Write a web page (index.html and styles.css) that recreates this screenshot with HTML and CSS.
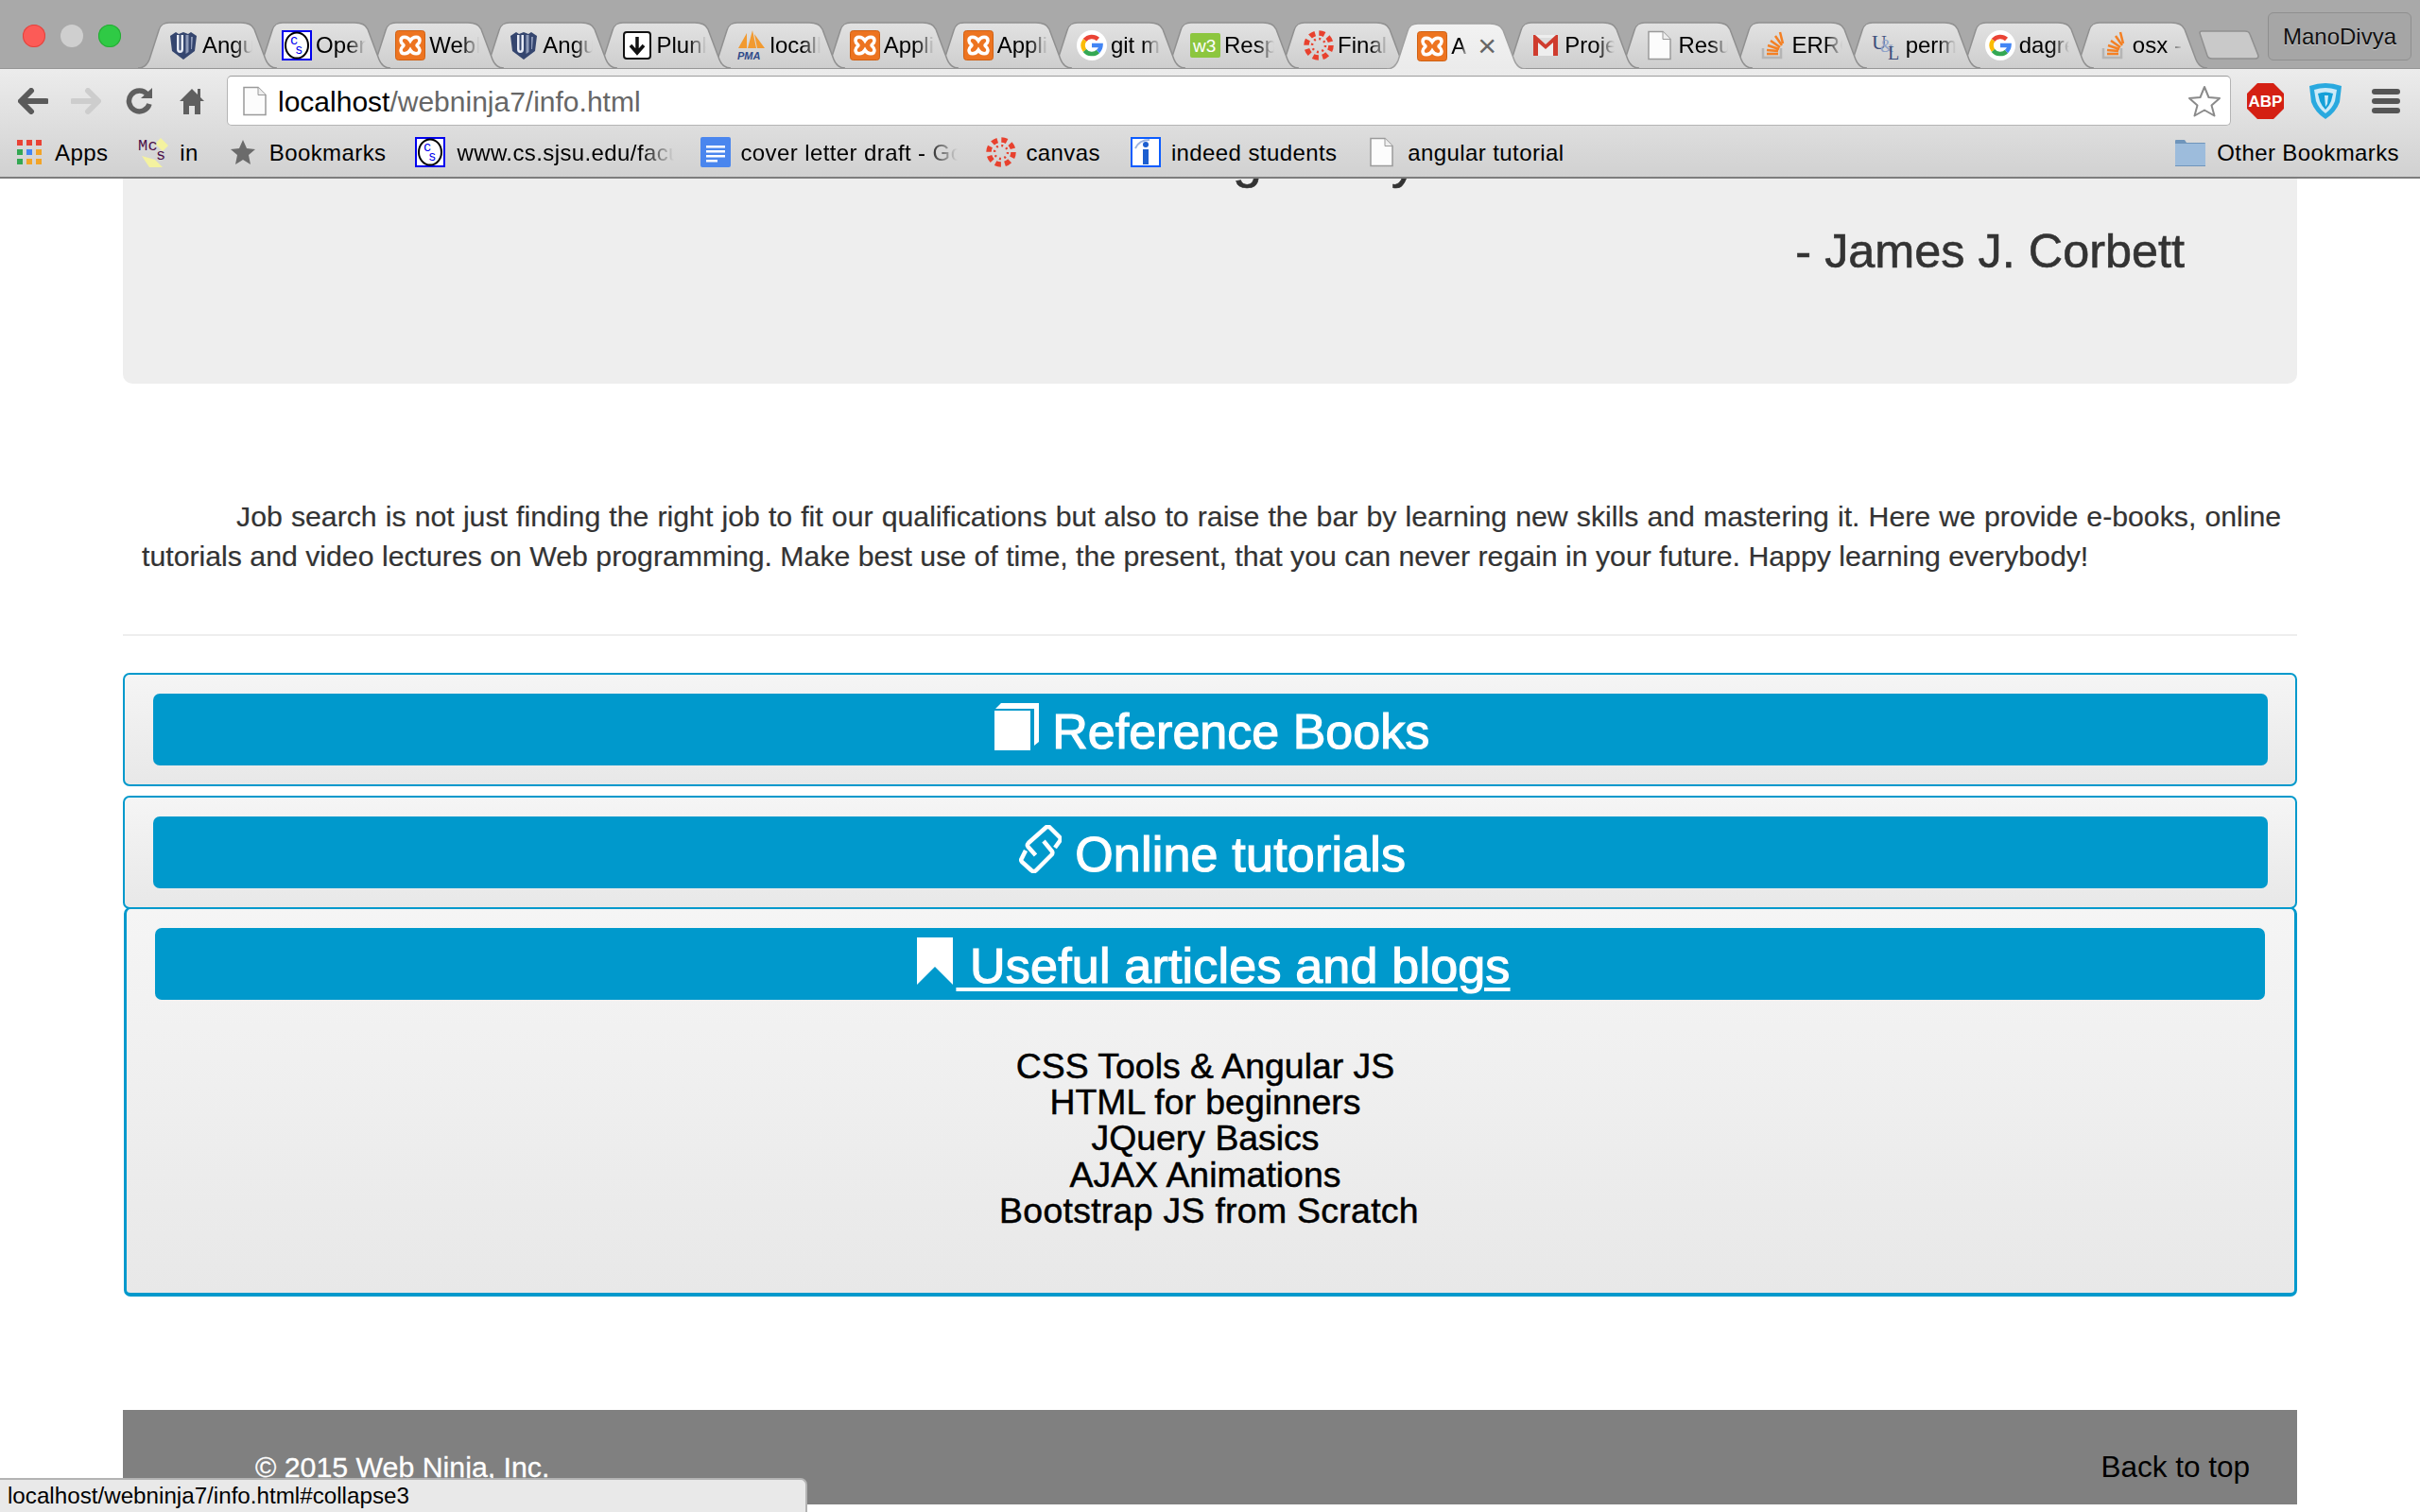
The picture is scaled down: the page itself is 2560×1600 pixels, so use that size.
FILE: index.html
```html
<!DOCTYPE html>
<html lang="en">
<head>
    <meta charset="UTF-8">
    <title>Web Ninja - Info</title>
    <link rel="stylesheet" href="styles.css">
</head>
<body>
    <!-- icon set -->
    <svg class="icon-defs">
        <symbol id="ico-angular" viewBox="0 0 32 32">
            <path d="M2 6l6-4 3 2 5-2 5 2 3-2 6 4-2 16-12 9-12-9z" fill="#35466f"/>
            <path d="M9 5v15q0 4 3.500 4t3.500-4V5h-2.500v15q0 1.500-1 1.500t-1-1.500V5z" fill="#e8ecf6"/>
            <path d="M18.500 5h3v18l-3 2zM24 7h2l-1 13h-1z" fill="#8d9ab8"/>
        </symbol>
        <symbol id="ico-cs" viewBox="0 0 32 32">
            <rect x="1" y="1" width="30" height="30" fill="#fff" stroke="#0000ee" stroke-width="2"/>
            <ellipse cx="16" cy="16" rx="12" ry="13.500" fill="#fff" stroke="#000" stroke-width="2"/>
            <text x="9" y="15" class="ico-mono" font-size="14" fill="#0000ee">c</text>
            <text x="14" y="25" class="ico-mono" font-size="14" fill="#0000ee">s</text>
        </symbol>
        <symbol id="ico-xampp" viewBox="0 0 32 32">
            <rect x="0.500" y="0.500" width="31" height="31" rx="3" fill="#ed7420" stroke="#cf6114"/>
            <path d="M16 11C13 6 6 6 6 11C6 14 9 15 9 16C9 17 6 18 6 21C6 26 13 26 16 21C19 26 26 26 26 21C26 18 23 17 23 16C23 15 26 14 26 11C26 6 19 6 16 11Z" fill="#ed7420" stroke="#fff" stroke-width="3.500"/>
        </symbol>
        <symbol id="ico-plunker" viewBox="0 0 32 32">
            <rect x="2" y="2" width="28" height="28" rx="3" fill="#fff" stroke="#111" stroke-width="2"/>
            <path d="M16 7v16M9 16l7 8 7-8" fill="none" stroke="#111" stroke-width="3.500"/>
        </symbol>
        <symbol id="ico-pma" viewBox="0 0 32 32">
            <path d="M2 19L11 3v16zM12 19L17 0l4 19zM22 19L19 4l11 15z" fill="#f29a30"/>
            <text x="1" y="31" class="ico-sans" font-size="11" font-weight="700" font-style="italic" fill="#2f4a8a">PMA</text>
        </symbol>
        <symbol id="ico-google" viewBox="0 0 32 32">
            <circle cx="16" cy="16" r="16" fill="#fff"/>
            <path d="M22.500 9.500A9.500 9.500 0 0 0 8.500 10.500" fill="none" stroke="#ea4335" stroke-width="4.500"/>
            <path d="M8.500 10.500A9.500 9.500 0 0 0 8.500 21.500" fill="none" stroke="#fbbc05" stroke-width="4.500"/>
            <path d="M8.500 21.500A9.500 9.500 0 0 0 22.500 22.500" fill="none" stroke="#34a853" stroke-width="4.500"/>
            <path d="M22.500 22.500A9.500 9.500 0 0 0 25.500 16H16" fill="none" stroke="#4285f4" stroke-width="4.500"/>
        </symbol>
        <symbol id="ico-w3" viewBox="0 0 32 32">
            <rect y="3" width="32" height="26" rx="2" fill="#8cc63f"/>
            <text x="3" y="23" class="ico-sans" font-size="19" fill="#fff">w3</text>
        </symbol>
        <symbol id="ico-canvas" viewBox="0 0 32 32">
            <circle cx="16" cy="16" r="13" fill="none" stroke="#e8412e" stroke-width="5.500" stroke-dasharray="6 4.200"/>
            <circle cx="16" cy="16" r="7" fill="none" stroke="#e8412e" stroke-width="2.500" stroke-dasharray="2 3.500"/>
        </symbol>
        <symbol id="ico-gmail" viewBox="0 0 32 32">
            <rect x="3" y="5" width="26" height="22" fill="#eee"/>
            <path d="M3 8l13 11L29 8" fill="#ddd"/>
            <path d="M3 5h2l11 10L27 5h2v22h-5V13l-8 7-8-7v14H3z" fill="#cf3c2e"/>
        </symbol>
        <symbol id="ico-doc" viewBox="0 0 32 32">
            <path d="M5 1.500h15l8 8v21H5z" fill="#fcfcfc" stroke="#9a9a9a" stroke-width="1.500"/>
            <path d="M20 1.500v8h8" fill="#eee" stroke="#9a9a9a" stroke-width="1"/>
        </symbol>
        <symbol id="ico-so" viewBox="0 0 32 32">
            <path d="M5 19v10h19V19" fill="none" stroke="#b5b5b5" stroke-width="2.500"/>
            <path d="M9 25h12M9 21l12 1M10 16l12 4M13 11l10 7M18 6l7 10M23 2l3 12" fill="none" stroke="#f48024" stroke-width="2.500"/>
        </symbol>
        <symbol id="ico-ul" viewBox="0 0 32 32">
            <text x="0" y="20" class="ico-serif" font-size="22" fill="#3d4f7c">U</text>
            <text x="9" y="23" class="ico-serif" font-size="18" fill="#8ea1c8">&amp;</text>
            <text x="17" y="31" class="ico-serif" font-size="20" fill="#3d4f7c">L</text>
        </symbol>
        <symbol id="ico-apps" viewBox="0 0 26 26">
            <path d="M0 0h6v6H0zM10 0h6v6h-6zM20 0h6v6h-6z" fill="#e94235"/>
            <path d="M0 10h6v6H0zM0 20h6v6H0z" fill="#34a853"/>
            <path d="M10 10h6v6h-6z" fill="#4285f4"/>
            <path d="M20 10h6v6h-6zM10 20h6v6h-6zM20 20h6v6h-6z" fill="#f2a428"/>
        </symbol>
        <symbol id="ico-mcs" viewBox="0 0 32 32">
            <path d="M24 1l8 8-6 6-8-8zM4 20l14 4 8 8H12z" fill="#f4f2a0"/>
            <text x="0" y="14" class="ico-mono" font-size="17" fill="#4b1048">Mc</text>
            <text x="19" y="24" class="ico-mono" font-size="17" fill="#4b1048">s</text>
        </symbol>
        <symbol id="ico-star" viewBox="0 0 26 26">
            <path d="M13 0l4 9 9 1-7 6 2 10-8-5-8 5 2-10-7-6 9-1z" fill="#6b6b6b"/>
        </symbol>
        <symbol id="ico-docs" viewBox="0 0 32 32">
            <rect width="32" height="32" rx="2" fill="#4a86ee"/>
            <path d="M6 9h20v2.500H6zM6 14h20v2.500H6zM6 19h20v2.500H6zM6 24h12v2.500H6z" fill="#fff"/>
        </symbol>
        <symbol id="ico-indeed" viewBox="0 0 32 32">
            <rect x="1" y="1" width="30" height="30" fill="#fff" stroke="#0b5cff" stroke-width="2"/>
            <path d="M5 12Q9 3 20 3" fill="none" stroke="#9db4df" stroke-width="2"/>
            <circle cx="16" cy="8" r="3" fill="#1d5fd0"/>
            <path d="M13 13h6v16h-6z" fill="#1d5fd0"/>
        </symbol>
        <symbol id="ico-folder" viewBox="0 0 32 32">
            <path d="M0 4q0-1 1-1h9l2 3h19q1 0 1 1v24H0z" fill="#6f95bb"/>
            <path d="M0 7h32v23H0z" fill="#9dbcdc"/>
        </symbol>
    </svg>

    <div class="window">
        <div class="tab-strip">
            <div class="traffic-lights">
                <span class="light light-red"></span>
                <span class="light light-gray"></span>
                <span class="light light-green"></span>
            </div>
            <div class="tab"><svg class="favicon"><use href="#ico-angular"/></svg><span class="tab-label">Angular</span></div>
            <div class="tab"><svg class="favicon"><use href="#ico-cs"/></svg><span class="tab-label">Open</span></div>
            <div class="tab"><svg class="favicon"><use href="#ico-xampp"/></svg><span class="tab-label">WebNinja</span></div>
            <div class="tab"><svg class="favicon"><use href="#ico-angular"/></svg><span class="tab-label">Angular</span></div>
            <div class="tab"><svg class="favicon"><use href="#ico-plunker"/></svg><span class="tab-label">Plunker</span></div>
            <div class="tab"><svg class="favicon"><use href="#ico-pma"/></svg><span class="tab-label">localhost</span></div>
            <div class="tab"><svg class="favicon"><use href="#ico-xampp"/></svg><span class="tab-label">Application</span></div>
            <div class="tab"><svg class="favicon"><use href="#ico-xampp"/></svg><span class="tab-label">Application</span></div>
            <div class="tab"><svg class="favicon"><use href="#ico-google"/></svg><span class="tab-label">git merge</span></div>
            <div class="tab"><svg class="favicon"><use href="#ico-w3"/></svg><span class="tab-label">Responsive</span></div>
            <div class="tab"><svg class="favicon"><use href="#ico-canvas"/></svg><span class="tab-label">Final</span></div>
            <div class="tab tab-active"><svg class="favicon"><use href="#ico-xampp"/></svg><span class="tab-label tab-label-short">Application</span><span class="tab-close">×</span></div>
            <div class="tab"><svg class="favicon"><use href="#ico-gmail"/></svg><span class="tab-label">Project</span></div>
            <div class="tab"><svg class="favicon"><use href="#ico-doc"/></svg><span class="tab-label">Resume</span></div>
            <div class="tab"><svg class="favicon"><use href="#ico-so"/></svg><span class="tab-label">ERROR</span></div>
            <div class="tab"><svg class="favicon"><use href="#ico-ul"/></svg><span class="tab-label">permission</span></div>
            <div class="tab"><svg class="favicon"><use href="#ico-google"/></svg><span class="tab-label">dagre</span></div>
            <div class="tab"><svg class="favicon"><use href="#ico-so"/></svg><span class="tab-label">osx - </span></div>
            <div class="new-tab"></div>
            <div class="profile-btn">ManoDivya</div>
        </div>

        <div class="browser-bars">
            <div class="toolbar">
                <div class="tool-btn">
                    <svg width="32" height="28" viewBox="0 0 32 28"><path d="M14 3L3 14l11 11M4 14h26" fill="none" stroke="#5a5a5a" stroke-width="6" stroke-linejoin="round" stroke-linecap="round"/></svg>
                </div>
                <div class="tool-btn">
                    <svg width="32" height="28" viewBox="0 0 32 28"><path d="M18 3l11 11-11 11M28 14H2" fill="none" stroke="#cdcdcd" stroke-width="6" stroke-linejoin="round" stroke-linecap="round"/></svg>
                </div>
                <div class="tool-btn">
                    <svg width="30" height="28" viewBox="0 0 30 28"><path d="M24 7A11 11 0 1 0 26 17" fill="none" stroke="#5f5f5f" stroke-width="5.500"/><path d="M17 11h12V0z" fill="#5f5f5f"/></svg>
                </div>
                <div class="tool-btn">
                    <svg width="26" height="28" viewBox="0 0 26 28"><path d="M13 1L0 14h4v14h6v-9h6v9h6V14h4l-4-4V1h-3v6z" fill="#5f5f5f"/></svg>
                </div>
                <div class="address-bar">
                    <svg class="address-doc"><use href="#ico-doc"/></svg>
                    <div class="url"><span class="url-host">localhost</span>/webninja7/info.html</div>
                    <svg class="address-star" width="36" height="34" viewBox="0 0 36 34"><path d="M18 2l4.500 11 11.500 1-8.500 7.500 3 11-10.500-6-10.500 6 3-11L2 14l11.500-1z" fill="#fff" stroke="#8a8a8a" stroke-width="2" stroke-linejoin="round"/></svg>
                </div>
                <div class="ext-btn">
                    <svg width="39" height="38" viewBox="0 0 39 38">
                        <path d="M11 0h17l11 11v16L28 38H11L0 27V11z" fill="#d42013"/>
                        <text x="19.500" y="25" class="ico-sans" font-size="17" font-weight="700" fill="#fff" text-anchor="middle">ABP</text>
                    </svg>
                </div>
                <div class="ext-btn">
                    <svg width="34" height="38" viewBox="0 0 34 38">
                        <path d="M0 3Q17-3 34 3L32 20Q28 31 17 38 6 31 2 20z" fill="#29a9df"/>
                        <path d="M5 7Q17 3 29 7L27 19Q24 27 17 32 10 27 7 19z" fill="#cdeaf7"/>
                        <path d="M9 11Q17 8 25 11L23 19Q21 24 17 28 13 24 11 19z" fill="#14a0d8"/>
                        <path d="M16 13h4l-1 9-2 3z" fill="#cdeaf7"/>
                    </svg>
                </div>
                <div class="ext-btn">
                    <svg width="30" height="26" viewBox="0 0 30 26"><path d="M3 0h24a3 3 0 0 1 0 6H3a3 3 0 0 1 0-6zM3 10h24a3 3 0 0 1 0 6H3a3 3 0 0 1 0-6zM3 20h24a3 3 0 0 1 0 6H3a3 3 0 0 1 0-6z" fill="#555"/></svg>
                </div>
            </div>

            <div class="bookmarks-bar">
                <div class="bookmark bookmark-apps"><svg class="bm-icon-sm"><use href="#ico-apps"/></svg><span>Apps</span></div>
                <div class="bookmark bookmark-in"><svg class="bm-icon"><use href="#ico-mcs"/></svg><span>in</span></div>
                <div class="bookmark bookmark-star"><svg class="bm-icon-sm"><use href="#ico-star"/></svg><span>Bookmarks</span></div>
                <div class="bookmark bookmark-cs"><svg class="bm-icon"><use href="#ico-cs"/></svg><span class="bm-fade bm-fade-cs">www.cs.sjsu.edu/faculty</span></div>
                <div class="bookmark bookmark-docs"><svg class="bm-icon"><use href="#ico-docs"/></svg><span class="bm-fade bm-fade-docs">cover letter draft - Google</span></div>
                <div class="bookmark bookmark-canvas"><svg class="bm-icon"><use href="#ico-canvas"/></svg><span>canvas</span></div>
                <div class="bookmark bookmark-indeed"><svg class="bm-icon"><use href="#ico-indeed"/></svg><span>indeed students</span></div>
                <div class="bookmark bookmark-doc"><svg class="bm-icon"><use href="#ico-doc"/></svg><span>angular tutorial</span></div>
                <div class="bookmark bookmark-other"><svg class="bm-icon"><use href="#ico-folder"/></svg><span>Other Bookmarks</span></div>
            </div>
        </div>

        <div class="page-view">
            <div class="page">
                <div class="well">
                    <div class="quote-line">of lifting every</div>
                    <div class="quote-author">- James J. Corbett</div>
                </div>

                <p class="intro"><span class="intro-lead">Job search is not just finding the right job to fit our qualifications but also to raise the bar by learning new skills and mastering it. Here we provide e-books, online</span> tutorials and video lectures on Web programming. Make best use of time, the present, that you can never regain in your future. Happy learning everybody!</p>

                <hr class="divider">

                <div class="panel">
                    <div class="panel-bar">
                        <svg class="bar-icon bar-icon-book" width="47" height="50" viewBox="0 0 47 50"><path d="M0 8h38v42H0zM1 6l6-6h40v41l-5 4V6z" fill="#fff"/></svg>
                        <a class="panel-link"> Reference Books</a>
                    </div>
                </div>

                <div class="panel">
                    <div class="panel-bar">
                        <svg class="bar-icon bar-icon-link" width="45" height="51" viewBox="0 0 45 51"><path d="M38 24l5-7q1.500-2 0-4L33 3q-2.500-2.500-5 0L10 19q-2 2-.5 4l8 9M26 17l9 11q1 2-1 4L18 48q-2.500 2.500-5 0L3 39q-1.500-2 0-4l4-8" fill="none" stroke="#fff" stroke-width="4.500"/></svg>
                        <a class="panel-link panel-link-wide"> Online tutorials</a>
                    </div>
                </div>

                <div class="panel panel-open">
                    <div class="panel-bar">
                        <svg class="bar-icon bar-icon-mark" width="38" height="50" viewBox="0 0 38 50"><path d="M0 0h38v50L19 31 0 50z" fill="#fff"/></svg><a class="panel-link panel-link-active" href="#collapse3"> Useful articles and blogs</a>
                    </div>
                    <ul class="article-list">
                        <li>CSS Tools &amp; Angular JS</li>
                        <li>HTML for beginners</li>
                        <li>JQuery Basics</li>
                        <li>AJAX Animations</li>
                        <li class="article-last">Bootstrap JS from Scratch</li>
                    </ul>
                </div>

                <footer class="site-footer">
                    <span class="copyright">© 2015 Web Ninja, Inc.</span>
                    <a class="back-top">Back to top</a>
                </footer>
            </div>
        </div>

        <div class="status-bubble">localhost/webninja7/info.html#collapse3</div>
    </div>
</body>
</html>
```

FILE: styles.css
```css
* {
    box-sizing: border-box;
}

body {
    margin: 0;
    font-family: "Liberation Sans", Arial, sans-serif;
    background: #fff;
}

.icon-defs {
    display: none;
}

.ico-sans {
    font-family: "Liberation Sans", sans-serif;
}

.ico-serif {
    font-family: "Liberation Serif", serif;
}

.ico-mono {
    font-family: "Liberation Mono", monospace;
}

.window {
    position: relative;
    display: flex;
    flex-direction: column;
    height: 1600px;
    overflow: hidden;
}

/* tabs */
.tab-strip {
    display: flex;
    align-items: flex-end;
    flex: none;
    height: 73px;
    border-bottom: 1px solid #969696;
    background: #a9a9a9;
}

.traffic-lights {
    display: flex;
    align-self: flex-start;
    gap: 16px;
    width: 145px;
    margin-top: 26px;
    padding-left: 24px;
}

.light {
    width: 24px;
    height: 24px;
    border-radius: 50%;
}

.light-red {
    background: #fc5b57;
    box-shadow: inset 0 0 0 1px #e0443e;
}

.light-gray {
    background: #cfcfcf;
}

.light-green {
    background: #2fca45;
    box-shadow: inset 0 0 0 1px #27aa35;
}

.tab {
    position: relative;
    display: flex;
    align-items: center;
    flex: none;
    width: 148px;
    height: 49px;
    margin-right: -27.9px;
    padding-left: 33px;
    background: url("data:image/svg+xml,%3Csvg xmlns='http://www.w3.org/2000/svg' width='148' height='49'%3E%3ClinearGradient id='g' x1='0' y1='0' x2='0' y2='1'%3E%3Cstop offset='0' stop-color='%23e2e2e2'/%3E%3Cstop offset='1' stop-color='%23cecece'/%3E%3C/linearGradient%3E%3Cpath d='M1 49C8 49 11 45 13 40L23 9C25 3 28 1 34 1H110C118 1 122 3 124 8L136 40C138 45 141 49 148 49' fill='url(%23g)' stroke='%23909090' stroke-width='1.5'/%3E%3C/svg%3E") no-repeat;
}

.tab:nth-child(2) { z-index: 18; }
.tab:nth-child(3) { z-index: 17; }
.tab:nth-child(4) { z-index: 16; }
.tab:nth-child(5) { z-index: 15; }
.tab:nth-child(6) { z-index: 14; }
.tab:nth-child(7) { z-index: 13; }
.tab:nth-child(8) { z-index: 12; }
.tab:nth-child(9) { z-index: 11; }
.tab:nth-child(10) { z-index: 10; }
.tab:nth-child(11) { z-index: 9; }
.tab:nth-child(12) { z-index: 8; }
.tab:nth-child(14) { z-index: 6; }
.tab:nth-child(15) { z-index: 5; }
.tab:nth-child(16) { z-index: 4; }
.tab:nth-child(17) { z-index: 3; }
.tab:nth-child(18) { z-index: 2; }
.tab:nth-child(19) { z-index: 1; }

.tab.tab-active {
    z-index: 30;
    margin-bottom: -1px;
    background: url("data:image/svg+xml,%3Csvg xmlns='http://www.w3.org/2000/svg' width='148' height='49'%3E%3ClinearGradient id='g' x1='0' y1='0' x2='0' y2='1'%3E%3Cstop offset='0' stop-color='%23f2f2f2'/%3E%3Cstop offset='1' stop-color='%23ebebeb'/%3E%3C/linearGradient%3E%3Cpath d='M1 49C8 49 11 45 13 40L23 9C25 3 28 1 34 1H110C118 1 122 3 124 8L136 40C138 45 141 49 148 49' fill='url(%23g)' stroke='%23a0a0a0' stroke-width='1.5'/%3E%3C/svg%3E") no-repeat;
}

.favicon {
    flex: none;
    width: 32px;
    height: 32px;
}

.tab-label {
    width: 53px;
    margin-left: 4px;
    overflow: hidden;
    font-size: 24px;
    line-height: 49px;
    white-space: nowrap;
    color: #000;
    -webkit-mask-image: linear-gradient(to right, #000 65%, transparent 100%);
    mask-image: linear-gradient(to right, #000 65%, transparent 100%);
}

.tab-label-short {
    width: 17px;
    margin-left: 4px;
}

.tab-close {
    margin-left: 11px;
    font-size: 34px;
    line-height: 49px;
    color: #666;
}

.new-tab {
    flex: none;
    align-self: flex-start;
    width: 64px;
    height: 31px;
    margin-top: 32px;
    margin-left: 19px;
    background: url("data:image/svg+xml,%3Csvg xmlns='http://www.w3.org/2000/svg' width='64' height='31'%3E%3Cpath d='M1 3Q1 1 3 1H49Q53 1 54 4L63 27Q63 30 60 30H14Q10 30 9 27Z' fill='%23c9c9c9' stroke='%23909090' stroke-width='1.5'/%3E%3C/svg%3E") no-repeat;
}

.profile-btn {
    flex: none;
    align-self: flex-start;
    width: 152px;
    height: 51px;
    margin-top: 13px;
    margin-left: 9px;
    border: 1px solid #8f8f8f;
    border-radius: 6px;
    background: #a6a6a6;
    font-size: 24px;
    line-height: 49px;
    text-align: center;
    color: #111;
    text-shadow: 0 1px 0 #d0d0d0;
}

/* toolbar and bookmarks */
.browser-bars {
    flex: none;
    height: 116px;
    border-bottom: 2px solid #7d7d7d;
    background: linear-gradient(#ececec, #d1d1d1);
}

.toolbar {
    display: flex;
    align-items: center;
    height: 60px;
    padding: 7px 4px 0 7px;
}

.tool-btn {
    display: flex;
    align-items: center;
    justify-content: center;
    flex: none;
    width: 56px;
}

.address-bar {
    display: flex;
    align-items: center;
    flex: 1;
    height: 53px;
    margin-left: 9px;
    margin-right: 4px;
    padding-left: 12px;
    padding-right: 9px;
    border: 1px solid #b4b4b4;
    border-top-color: #9c9c9c;
    border-radius: 5px;
    background: #fff;
}

.address-doc {
    flex: none;
    width: 32px;
    height: 32px;
}

.url {
    flex: 1;
    margin-left: 9px;
    padding-top: 2px;
    font-size: 30px;
    color: #666;
}

.url-host {
    color: #000;
}

.ext-btn {
    display: flex;
    align-items: center;
    justify-content: center;
    flex: none;
    width: 64px;
}

.bookmarks-bar {
    display: flex;
    align-items: center;
    height: 54px;
    padding-top: 2px;
    padding-left: 18px;
    padding-right: 22px;
    font-size: 24px;
    letter-spacing: 0.4px;
    color: #000;
}

.bookmark {
    display: flex;
    align-items: center;
    flex: none;
    gap: 12px;
    margin-right: 34px;
    white-space: nowrap;
}

.bookmark span {
    padding-top: 2px;
}

.bm-icon {
    flex: none;
    width: 32px;
    height: 32px;
}

.bm-icon-sm {
    flex: none;
    width: 26px;
    height: 26px;
}

.bm-fade {
    overflow: hidden;
    -webkit-mask-image: linear-gradient(to right, #000 85%, transparent 100%);
    mask-image: linear-gradient(to right, #000 85%, transparent 100%);
}

.bm-fade-cs {
    width: 230px;
}

.bm-fade-docs {
    width: 230px;
}

.bookmark-apps {
    gap: 14px;
    margin-right: 32px;
}

.bookmark-star {
    gap: 15px;
    margin-right: 31px;
}

.bookmark-cs {
    margin-right: 28px;
}

.bookmark-docs {
    gap: 10px;
    margin-right: 30px;
}

.bookmark-canvas {
    gap: 10px;
    margin-right: 32px;
}

.bookmark-indeed {
    gap: 11px;
    margin-right: 31px;
}

.bookmark-doc {
    margin-right: auto;
}

.bookmark-other {
    margin-right: 0;
}

/* page */
.page-view {
    flex: 1;
    overflow: hidden;
}

.page {
    width: 2300px;
    margin: -56px auto 0;
}

.well {
    height: 273px;
    border-radius: 10px;
    background: #eee;
    color: #333;
}

.quote-line {
    padding-left: 70px;
    font-size: 56px;
    line-height: 70px;
    word-spacing: 12px;
    text-align: center;
    -webkit-text-stroke: 0.6px #333;
}

.quote-author {
    margin-top: 28px;
    padding-right: 119px;
    font-size: 50.4px;
    line-height: 70px;
    text-align: right;
    -webkit-text-stroke: 0.6px #333;
}

.intro {
    margin: 120px 0 0;
    padding: 0 10px 0 20px;
    font-size: 30.25px;
    line-height: 42px;
    text-indent: 100px;
    color: #333;
    -webkit-text-stroke: 0.2px #333;
}

.intro-lead {
    word-spacing: 0.7px;
}

.divider {
    margin: 61px 0 39px;
    border: 0;
    border-top: 2px solid #eee;
}

.panel {
    margin-bottom: 10px;
    padding: 20px 29px 20px 30px;
    border: 2px solid #0099cc;
    border-radius: 7px;
    background: linear-gradient(#f5f5f5, #e8e8e8);
}

.panel-bar {
    height: 76px;
    border-radius: 7px;
    background: #0099cc;
    font-size: 52px;
    line-height: 80px;
    text-align: center;
    color: #fff;
}

.bar-icon {
    vertical-align: -2px;
}

.bar-icon-book {
    margin-left: 3px;
}

.bar-icon-link {
    margin-left: 4px;
}

.bar-icon-mark {
    margin-left: 8px;
}

.panel-link {
    color: #fff;
    -webkit-text-stroke: 1.2px #fff;
}

.panel-link-wide {
    letter-spacing: 0.2px;
}

.panel-link-active {
    margin-left: 3px;
    letter-spacing: 0.2px;
    text-decoration: underline;
    text-decoration-thickness: 4px;
    text-underline-offset: 5px;
}

.panel-open {
    margin: -12px 0 0 1px;
    padding: 20px 31px 0 30px;
    border-width: 2px 3px 4px;
}

.article-list {
    margin: 0;
    padding: 51px 10px 68px 0;
    list-style: none;
    font-size: 37.4px;
    line-height: 38.2px;
    text-align: center;
    color: #000;
    -webkit-text-stroke: 0.5px #000;
}

.article-last {
    padding-left: 8px;
    letter-spacing: 0.3px;
}

.site-footer {
    display: flex;
    justify-content: space-between;
    height: 100px;
    margin-top: 120px;
    padding: 38px 50px 0 140px;
    background: #808080;
    line-height: 44px;
}

.copyright {
    margin-top: 1px;
    font-size: 30.3px;
    color: #fff;
    -webkit-text-stroke: 0.3px #fff;
}

.back-top {
    font-size: 31.5px;
    color: #000;
}

/* link preview at the bottom of the window */
.status-bubble {
    position: absolute;
    left: 0;
    bottom: 0;
    width: 854px;
    height: 36px;
    padding-left: 8px;
    border: 2px solid #b3b3b3;
    border-left: 0;
    border-bottom: 0;
    border-top-right-radius: 7px;
    background: #e9e9e9;
    font-size: 24.2px;
    line-height: 33px;
    color: #000;
}
```
